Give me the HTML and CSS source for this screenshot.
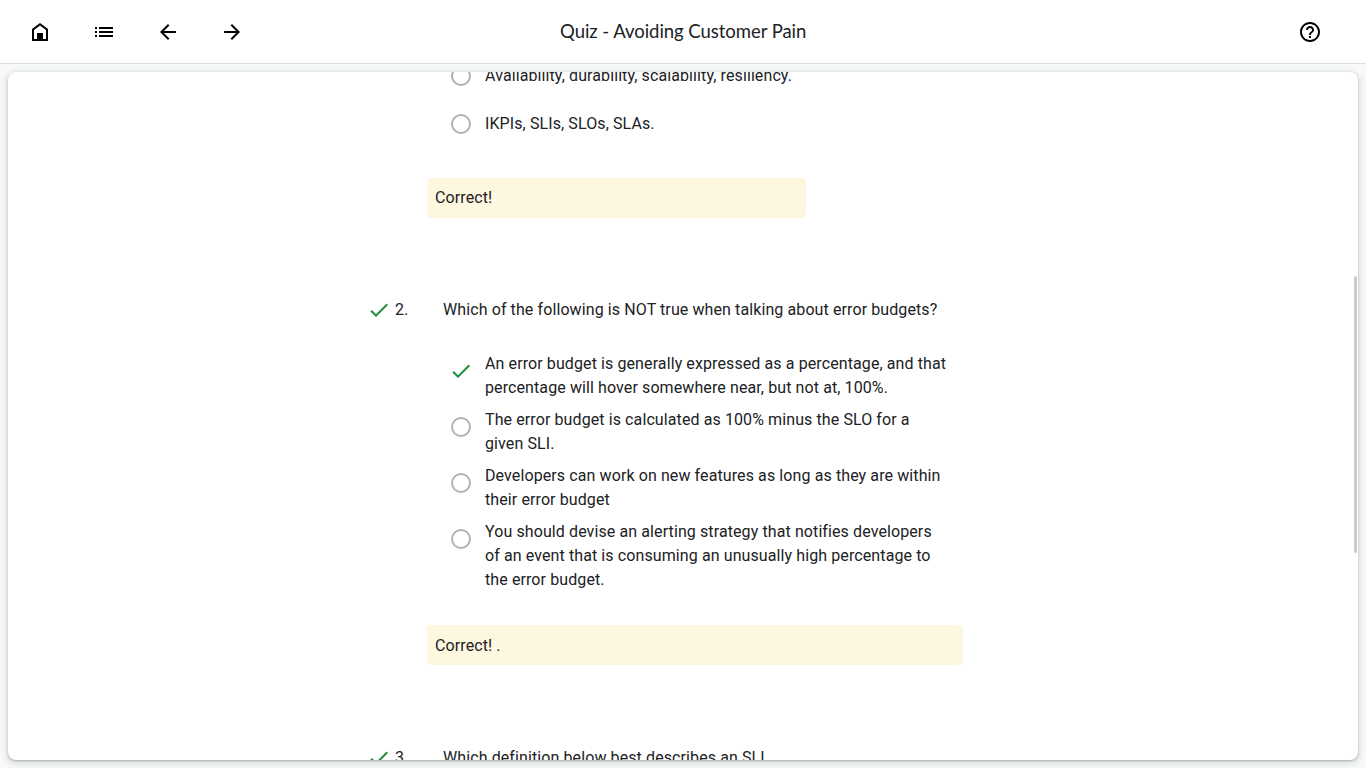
FILE: index.html
```html
<!DOCTYPE html>
<html lang="en">
<head>
<meta charset="utf-8">
<title>Quiz - Avoiding Customer Pain</title>
<link rel="stylesheet" href="styles.css">
</head>
<body>
<header class="topbar">
  <nav class="nav">
    <button class="icon-btn" aria-label="Home"><svg viewBox="0 0 24 24"><path fill-rule="evenodd" d="M12 3L4 9v12h16V9zM6 10l6-4.5L18 10v9h-3v-6H9v6H6z"/></svg></button>
    <button class="icon-btn" aria-label="Outline"><svg viewBox="0 0 24 24"><path d="M3 7h2v2H3zm0 4h2v2H3zm0 4h2v2H3zM7 7h14v2H7zm0 4h14v2H7zm0 4h14v2H7z"/></svg></button>
    <button class="icon-btn" aria-label="Previous"><svg viewBox="0 0 24 24"><path d="M20 11H7.83l5.59-5.59L12 4l-8 8 8 8 1.41-1.41L7.83 13H20v-2z"/></svg></button>
    <button class="icon-btn" aria-label="Next"><svg viewBox="0 0 24 24"><path d="M12 4l-1.41 1.41L16.17 11H4v2h12.17l-5.58 5.59L12 20l8-8z"/></svg></button>
  </nav>
  <h1 class="title">Quiz - Avoiding Customer Pain</h1>
  <button class="icon-btn help" aria-label="Help"><svg viewBox="0 0 24 24"><path d="M11 18h2v-2h-2v2zm1-16C6.48 2 2 6.48 2 12s4.48 10 10 10 10-4.48 10-10S17.52 2 12 2zm0 18c-4.41 0-8-3.59-8-8s3.59-8 8-8 8 3.59 8 8-3.59 8-8 8zm0-14c-2.21 0-4 1.79-4 4h2c0-1.1.9-2 2-2s2 .9 2 2c0 2-3 1.75-3 5h2c0-2.25 3-2.5 3-5 0-2.21-1.79-4-4-4z"/></svg></button>
</header>
<main class="panel">
  <div class="quiz">
    <section class="question first">
      <div class="option single"><span class="radio"></span><p>Availability, durability, scalability, resiliency.</p></div>
      <div class="option single"><span class="radio"></span><p>IKPIs, SLIs, SLOs, SLAs.</p></div>
      <div class="feedback short">Correct!</div>
    </section>
    <section class="question">
      <div class="prompt"><svg class="check" viewBox="0 0 24 24"><path d="M9 16.17L4.83 12l-1.42 1.41L9 19 21 7l-1.41-1.41z"/></svg><span class="number">2.</span><p>Which of the following is NOT true when talking about error budgets?</p></div>
      <div class="options">
        <div class="option"><svg class="check" viewBox="0 0 24 24"><path d="M9 16.17L4.83 12l-1.42 1.41L9 19 21 7l-1.41-1.41z"/></svg><p>An error budget is generally expressed as a percentage, and that<br>percentage will hover somewhere near, but not at, 100%.</p></div>
        <div class="option"><span class="radio"></span><p>The error budget is calculated as 100% minus the SLO for a<br>given SLI.</p></div>
        <div class="option"><span class="radio"></span><p>Developers can work on new features as long as they are within<br>their error budget</p></div>
        <div class="option"><span class="radio"></span><p>You should devise an alerting strategy that notifies developers<br>of an event that is consuming an unusually high percentage to<br>the error budget.</p></div>
      </div>
      <div class="feedback">Correct! .</div>
    </section>
    <section class="question">
      <div class="prompt"><svg class="check" viewBox="0 0 24 24"><path d="M9 16.17L4.83 12l-1.42 1.41L9 19 21 7l-1.41-1.41z"/></svg><span class="number">3.</span><p>Which definition below best describes an SLI.</p></div>
    </section>
  </div>
  <div class="scrollbar"></div>
</main>
</body>
</html>
```

FILE: styles.css
```css
* { box-sizing: border-box; }
body {
  margin: 0;
  height: 768px;
  overflow: hidden;
  display: flex;
  flex-direction: column;
  background: #f8f9fa;
  color: #202124;
  font: 16px/24px Roboto, sans-serif;
  letter-spacing: .1px;
}
p, h1 { margin: 0; }
svg { display: block; }
.topbar {
  flex: none;
  height: 64px;
  padding: 0 36px 0 8px;
  display: grid;
  grid-template-columns: 552px 1fr auto;
  align-items: center;
  background: #fff;
  border-bottom: 1px solid #dadce0;
}
.nav { display: flex; }
.icon-btn { width: 64px; height: 64px; padding: 20px; border: 0; background: none; }
.icon-btn svg { width: 24px; height: 24px; fill: #000; }
.help { width: 24px; padding: 20px 0; justify-self: end; margin-right: 8px; }
.title { padding-bottom: 2px; font: 400 18.5px/24px Lato, Roboto, sans-serif; letter-spacing: -.04px; }
.panel {
  position: relative;
  flex: none;
  height: 688px;
  margin: 8px;
  overflow: hidden;
  background: #fff;
  border-radius: 8px;
  box-shadow: 0 1px 2px rgba(60,64,67,.3), 0 2px 6px 2px rgba(60,64,67,.15);
}
.quiz { width: 596px; margin-left: 359px; }
.question { margin-bottom: 80px; }
.question + .question + .question { margin-top: 81px; }
.first { padding-top: 1px; margin-top: -9px; }
.prompt { display: flex; height: 24px; align-items: center; margin-bottom: 30px; }
.check { flex: none; width: 24px; height: 24px; fill: #1e8e3e; }
.prompt .check { margin-right: 4px; }
.number { width: 48px; }
.option { display: flex; padding-left: 82px; margin-bottom: 8px; }
.option p { white-space: nowrap; }
.option > .check { margin: 7px 12px 0 0; }
.radio { flex: none; width: 20px; height: 20px; margin: 9px 14px 0 2px; border: 2px solid #b2b2b2; border-radius: 50%; }
.single { margin-bottom: 24px; }
.single .radio { margin-top: 2px; }
.feedback { width: 536px; height: 40px; margin: 33px 0 0 60px; padding: 9px 8px 7px; background: #fef7e0; border-radius: 4px; }
.short { width: 379px; margin-top: 42px; padding: 8px; }
.scrollbar { position: absolute; right: 1px; top: 204px; width: 3px; height: 277px; background: #ccc; border-radius: 2px; }
```
